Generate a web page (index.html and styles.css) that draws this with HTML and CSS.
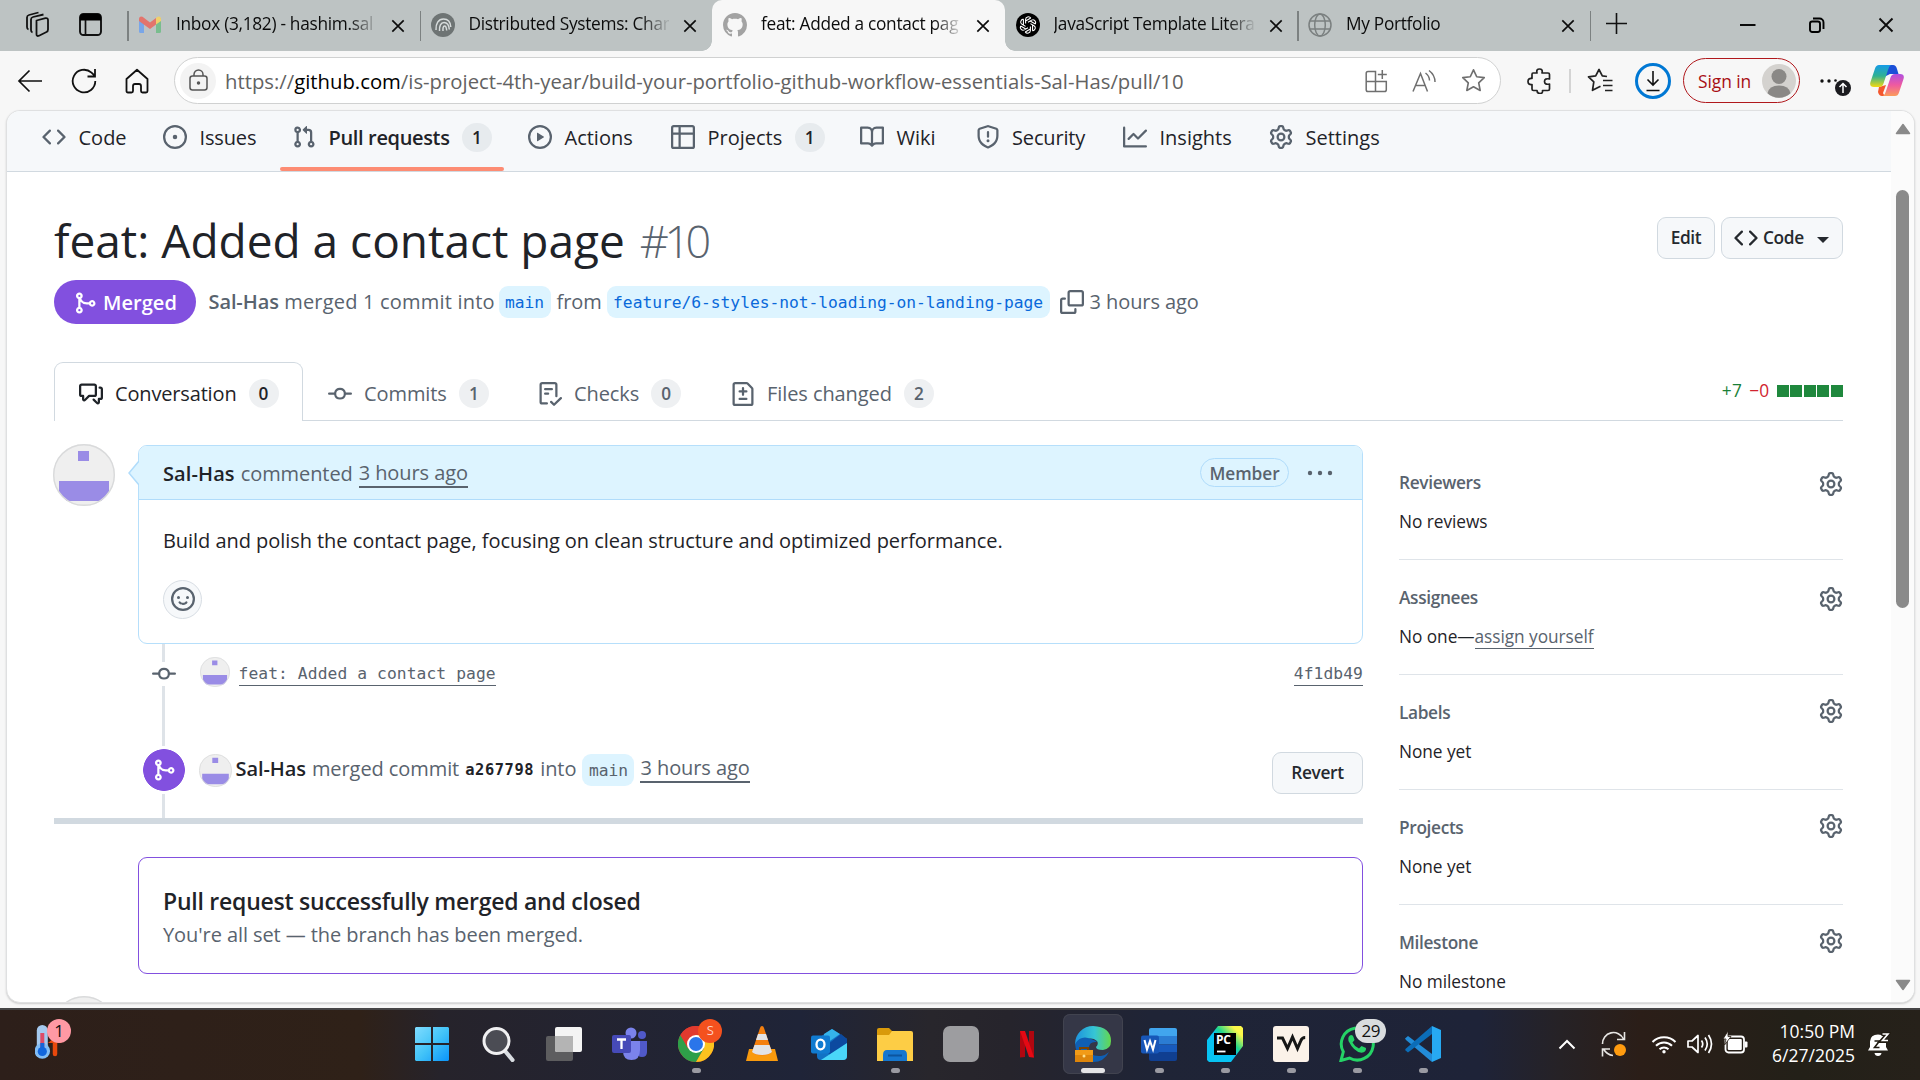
FILE: index.html
```html
<!DOCTYPE html>
<html lang="en">
<head>
<meta charset="utf-8">
<title>feat: Added a contact page</title>
<link rel="stylesheet" href="styles.css">
</head>
<body>
<svg class="defs" aria-hidden="true">
  <symbol id="code" viewBox="0 0 16 16"><path d="m11.28 3.22 4.25 4.25a.75.75 0 0 1 0 1.06l-4.25 4.25a.749.749 0 0 1-1.275-.326.749.749 0 0 1 .215-.734L13.94 8l-3.72-3.72a.749.749 0 0 1 .326-1.275.749.749 0 0 1 .734.215Zm-6.56 0a.751.751 0 0 1 1.042.018.751.751 0 0 1 .018 1.042L2.06 8l3.72 3.72a.749.749 0 0 1-.326 1.275.749.749 0 0 1-.734-.215L.47 8.53a.75.75 0 0 1 0-1.06Z"/></symbol>
  <symbol id="issue" viewBox="0 0 16 16"><path d="M8 9.5a1.5 1.5 0 1 0 0-3 1.5 1.5 0 0 0 0 3Z"/><path d="M8 0a8 8 0 1 1 0 16A8 8 0 0 1 8 0ZM1.5 8a6.5 6.5 0 1 0 13 0 6.5 6.5 0 0 0-13 0Z"/></symbol>
  <symbol id="pr" viewBox="0 0 16 16"><path d="M1.5 3.25a2.25 2.25 0 1 1 3 2.122v5.256a2.251 2.251 0 1 1-1.5 0V5.372A2.25 2.25 0 0 1 1.5 3.25Zm5.677-.177L9.573.677A.25.25 0 0 1 10 .854V2.5h1A2.5 2.5 0 0 1 13.5 5v5.628a2.251 2.251 0 1 1-1.5 0V5a1 1 0 0 0-1-1h-1v1.646a.25.25 0 0 1-.427.177L7.177 3.427a.25.25 0 0 1 0-.354ZM3.75 2.5a.75.75 0 1 0 0 1.5.75.75 0 0 0 0-1.5Zm0 9.5a.75.75 0 1 0 0 1.5.75.75 0 0 0 0-1.5Zm8.25.75a.75.75 0 1 0 1.5 0 .75.75 0 0 0-1.5 0Z"/></symbol>
  <symbol id="play" viewBox="0 0 16 16"><path d="M8 0a8 8 0 1 1 0 16A8 8 0 0 1 8 0ZM1.5 8a6.5 6.5 0 1 0 13 0 6.5 6.5 0 0 0-13 0Zm4.879-2.773 4.264 2.559a.25.25 0 0 1 0 .428l-4.264 2.559A.25.25 0 0 1 6 10.559V5.442a.25.25 0 0 1 .379-.215Z"/></symbol>
  <symbol id="table" viewBox="0 0 16 16"><path d="M0 1.75C0 .784.784 0 1.75 0h12.5C15.216 0 16 .784 16 1.75v12.5A1.75 1.75 0 0 1 14.25 16H1.75A1.75 1.75 0 0 1 0 14.25ZM6.5 6.5v8h7.75a.25.25 0 0 0 .25-.25V6.5Zm8-1.5V1.75a.25.25 0 0 0-.25-.25H6.5V5Zm-13 1.5v7.75c0 .138.112.25.25.25H5v-8ZM5 5V1.5H1.75a.25.25 0 0 0-.25.25V5Z"/></symbol>
  <symbol id="book" viewBox="0 0 16 16"><path d="M0 1.75A.75.75 0 0 1 .75 1h4.253c1.227 0 2.317.59 3 1.501A3.743 3.743 0 0 1 11.006 1h4.245a.75.75 0 0 1 .75.75v10.5a.75.75 0 0 1-.75.75h-4.507a2.25 2.25 0 0 0-1.591.659l-.622.621a.75.75 0 0 1-1.06 0l-.622-.621A2.25 2.25 0 0 0 5.258 13H.75a.75.75 0 0 1-.75-.75Zm7.251 10.324.004-5.073-.002-2.253A2.25 2.25 0 0 0 5.003 2.5H1.5v9h3.757a3.75 3.75 0 0 1 1.994.574ZM8.755 4.75l-.004 7.322a3.752 3.752 0 0 1 1.992-.572H14.5v-9h-3.495a2.25 2.25 0 0 0-2.25 2.25Z"/></symbol>
  <symbol id="shield" viewBox="0 0 16 16"><path d="M7.467.133a1.748 1.748 0 0 1 1.066 0l5.25 1.68A1.75 1.75 0 0 1 15 3.48V7c0 1.566-.32 3.182-1.303 4.682-.983 1.498-2.585 2.813-5.032 3.855a1.697 1.697 0 0 1-1.33 0c-2.447-1.042-4.049-2.357-5.032-3.855C1.32 10.182 1 8.566 1 7V3.48a1.75 1.75 0 0 1 1.217-1.667Zm.61 1.429a.25.25 0 0 0-.153 0l-5.25 1.68a.25.25 0 0 0-.174.238V7c0 1.358.275 2.666 1.057 3.86.784 1.194 2.121 2.34 4.366 3.297a.196.196 0 0 0 .154 0c2.245-.956 3.582-2.104 4.366-3.298C13.225 9.666 13.5 8.36 13.5 7V3.48a.251.251 0 0 0-.174-.237l-5.25-1.68ZM8.75 4.75v3a.75.75 0 0 1-1.5 0v-3a.75.75 0 0 1 1.5 0ZM9 10.5a1 1 0 1 1-2 0 1 1 0 0 1 2 0Z"/></symbol>
  <symbol id="graph" viewBox="0 0 16 16"><path d="M1.5 1.75V13.5h13.75a.75.75 0 0 1 0 1.5H.75a.75.75 0 0 1-.75-.75V1.75a.75.75 0 0 1 1.5 0Zm14.28 2.53-5.25 5.25a.75.75 0 0 1-1.06 0L7 7.06 4.28 9.78a.751.751 0 0 1-1.042-.018.751.751 0 0 1-.018-1.042l3.25-3.25a.75.75 0 0 1 1.06 0L10 7.94l4.72-4.72a.751.751 0 0 1 1.042.018.751.751 0 0 1 .018 1.042Z"/></symbol>
  <symbol id="gear" viewBox="0 0 16 16"><path d="M8 0a8.2 8.2 0 0 1 .701.031C9.444.095 9.99.645 10.16 1.29l.288 1.107c.018.066.079.158.212.224.231.114.454.243.668.386.123.082.233.09.299.071l1.103-.303c.644-.176 1.392.021 1.82.63.27.385.506.792.704 1.218.315.675.111 1.422-.364 1.891l-.814.806c-.049.048-.098.147-.088.294.016.257.016.515 0 .772-.01.147.038.246.088.294l.814.806c.475.469.679 1.216.364 1.891a7.977 7.977 0 0 1-.704 1.217c-.428.61-1.176.807-1.82.63l-1.102-.302c-.067-.019-.177-.011-.3.071a5.909 5.909 0 0 1-.668.386c-.133.066-.194.158-.211.224l-.29 1.106c-.168.646-.715 1.196-1.458 1.26a8.006 8.006 0 0 1-1.402 0c-.743-.064-1.289-.614-1.458-1.26l-.289-1.106c-.018-.066-.079-.158-.212-.224a5.738 5.738 0 0 1-.668-.386c-.123-.082-.233-.09-.299-.071l-1.103.303c-.644.176-1.392-.021-1.82-.63a8.12 8.12 0 0 1-.704-1.218c-.315-.675-.111-1.422.363-1.891l.815-.806c.05-.048.098-.147.088-.294a6.214 6.214 0 0 1 0-.772c.01-.147-.038-.246-.088-.294l-.815-.806C.635 6.045.431 5.298.746 4.623a7.92 7.92 0 0 1 .704-1.217c.428-.61 1.176-.807 1.82-.63l1.102.302c.067.019.177.011.3-.071.214-.143.437-.272.668-.386.133-.066.194-.158.211-.224l.29-1.106C6.009.645 6.556.095 7.299.03 7.53.01 7.764 0 8 0Zm-.571 1.525c-.036.003-.108.036-.137.146l-.289 1.105c-.147.561-.549.967-.998 1.189-.173.086-.34.183-.5.29-.417.278-.97.423-1.529.27l-1.103-.303c-.109-.03-.175.016-.195.045-.22.312-.412.644-.573.99-.014.031-.021.11.059.19l.815.806c.411.406.562.957.53 1.456a4.709 4.709 0 0 0 0 .582c.032.499-.119 1.05-.53 1.456l-.815.806c-.081.08-.073.159-.059.19.162.346.353.677.573.989.02.03.085.076.195.046l1.102-.303c.56-.153 1.113-.008 1.53.27.161.107.328.204.501.29.447.222.85.629.997 1.189l.289 1.105c.029.109.101.143.137.146a6.6 6.6 0 0 0 1.142 0c.036-.003.108-.036.137-.146l.289-1.105c.147-.561.549-.967.998-1.189.173-.086.34-.183.5-.29.417-.278.97-.423 1.529-.27l1.103.303c.109.029.175-.016.195-.045.22-.313.411-.644.573-.99.014-.031.021-.11-.059-.19l-.815-.806c-.411-.406-.562-.957-.53-1.456a4.709 4.709 0 0 0 0-.582c-.032-.499.119-1.05.53-1.456l.815-.806c.081-.08.073-.159.059-.19a6.464 6.464 0 0 0-.573-.989c-.02-.03-.085-.076-.195-.046l-1.102.303c-.56.153-1.113.008-1.53-.27a4.44 4.44 0 0 0-.501-.29c-.447-.222-.85-.629-.997-1.189l-.289-1.105c-.029-.11-.101-.143-.137-.146a6.6 6.6 0 0 0-1.142 0ZM11 8a3 3 0 1 1-6 0 3 3 0 0 1 6 0ZM9.5 8a1.5 1.5 0 1 0-3.001.001A1.5 1.5 0 0 0 9.5 8Z"/></symbol>
  <symbol id="merge" viewBox="0 0 16 16"><path d="M5.45 5.154A4.25 4.25 0 0 0 9.25 7.5h1.378a2.251 2.251 0 1 1 0 1.5H9.25A5.734 5.734 0 0 1 5 7.123v3.505a2.25 2.25 0 1 1-1.5 0V5.372a2.25 2.25 0 1 1 1.95-.218ZM4.25 13.5a.75.75 0 1 0 0-1.5.75.75 0 0 0 0 1.5Zm8.5-4.5a.75.75 0 1 0 0-1.5.75.75 0 0 0 0 1.5ZM5 3.25a.75.75 0 1 0 0 .005V3.25Z"/></symbol>
  <symbol id="commit" viewBox="0 0 16 16"><path d="M11.93 8.5a4.002 4.002 0 0 1-7.86 0H.75a.75.75 0 0 1 0-1.5h3.32a4.002 4.002 0 0 1 7.86 0h3.32a.75.75 0 0 1 0 1.5Zm-1.43-.75a2.5 2.5 0 1 0-5 0 2.5 2.5 0 0 0 5 0Z"/></symbol>
  <symbol id="comments" viewBox="0 0 16 16"><path d="M1.75 1h8.5c.966 0 1.75.784 1.75 1.75v5.5A1.75 1.75 0 0 1 10.25 10H7.061l-2.574 2.573A1.458 1.458 0 0 1 2 11.543V10h-.25A1.75 1.75 0 0 1 0 8.25v-5.5C0 1.784.784 1 1.75 1ZM1.5 2.75v5.5c0 .138.112.25.25.25h1a.75.75 0 0 1 .75.75v2.19l2.72-2.72a.749.749 0 0 1 .53-.22h3.5a.25.25 0 0 0 .25-.25v-5.5a.25.25 0 0 0-.25-.25h-8.5a.25.25 0 0 0-.25.25Zm13 2a.25.25 0 0 0-.25-.25h-.5a.75.75 0 0 1 0-1.5h.5c.966 0 1.75.784 1.75 1.75v5.5A1.75 1.75 0 0 1 14.25 12H14v1.543a1.458 1.458 0 0 1-2.487 1.03L9.22 12.28a.749.749 0 0 1 .326-1.275.749.749 0 0 1 .734.215l2.22 2.22v-2.19a.75.75 0 0 1 .75-.75h1a.25.25 0 0 0 .25-.25Z"/></symbol>
  <symbol id="checklist" viewBox="0 0 16 16"><path d="M2.5 1.75v11.5c0 .138.112.25.25.25h3.17a.75.75 0 0 1 0 1.5H2.75A1.75 1.75 0 0 1 1 13.25V1.75C1 .784 1.784 0 2.75 0h8.5C12.216 0 13 .784 13 1.75v7.736a.75.75 0 0 1-1.5 0V1.75a.25.25 0 0 0-.25-.25h-8.5a.25.25 0 0 0-.25.25Zm13.274 9.537v-.001l-4.557 4.45a.75.75 0 0 1-1.055-.008l-1.943-1.95a.75.75 0 0 1 1.062-1.058l1.419 1.425 4.026-3.932a.75.75 0 1 1 1.048 1.074ZM4.75 4h4.5a.75.75 0 0 1 0 1.5h-4.5a.75.75 0 0 1 0-1.5ZM4 7.75A.75.75 0 0 1 4.75 7h2a.75.75 0 0 1 0 1.5h-2A.75.75 0 0 1 4 7.75Z"/></symbol>
  <symbol id="filediff" viewBox="0 0 16 16"><path d="M1 1.75C1 .784 1.784 0 2.75 0h7.586c.464 0 .909.184 1.237.513l2.914 2.914c.329.328.513.773.513 1.237v9.586A1.75 1.75 0 0 1 13.25 16H2.75A1.75 1.75 0 0 1 1 14.25Zm1.75-.25a.25.25 0 0 0-.25.25v12.5c0 .138.112.25.25.25h10.5a.25.25 0 0 0 .25-.25V4.664a.25.25 0 0 0-.073-.177l-2.914-2.914a.25.25 0 0 0-.177-.073ZM8 3.25a.75.75 0 0 1 .75.75v1.5h1.5a.75.75 0 0 1 0 1.5h-1.5v1.5a.75.75 0 0 1-1.5 0V7h-1.5a.75.75 0 0 1 0-1.5h1.5V4A.75.75 0 0 1 8 3.25Zm-3 8a.75.75 0 0 1 .75-.75h4.5a.75.75 0 0 1 0 1.5h-4.5a.75.75 0 0 1-.75-.75Z"/></symbol>
  <symbol id="copy" viewBox="0 0 16 16"><path d="M0 6.75C0 5.784.784 5 1.75 5h1.5a.75.75 0 0 1 0 1.5h-1.5a.25.25 0 0 0-.25.25v7.5c0 .138.112.25.25.25h7.5a.25.25 0 0 0 .25-.25v-1.5a.75.75 0 0 1 1.5 0v1.5A1.75 1.75 0 0 1 9.25 16h-7.5A1.75 1.75 0 0 1 0 14.25Z"/><path d="M5 1.75C5 .784 5.784 0 6.75 0h7.5C15.216 0 16 .784 16 1.75v7.5A1.75 1.75 0 0 1 14.25 11h-7.5A1.75 1.75 0 0 1 5 9.25Zm1.75-.25a.25.25 0 0 0-.25.25v7.5c0 .138.112.25.25.25h7.5a.25.25 0 0 0 .25-.25v-7.5a.25.25 0 0 0-.25-.25Z"/></symbol>
  <symbol id="smiley" viewBox="0 0 16 16"><path d="M8 0a8 8 0 1 1 0 16A8 8 0 0 1 8 0ZM1.5 8a6.5 6.5 0 1 0 13 0 6.5 6.5 0 0 0-13 0Zm3.82 1.636a.75.75 0 0 1 1.038.175l.007.009c.103.118.22.222.35.31.264.178.683.37 1.285.37.602 0 1.02-.192 1.285-.371.13-.088.247-.192.35-.31l.007-.008a.75.75 0 0 1 1.222.87l-.022-.015c.02.013.021.015.021.015v.001l-.001.002-.002.003-.005.007-.014.019a2.066 2.066 0 0 1-.184.213c-.16.166-.338.316-.53.445-.63.418-1.37.638-2.127.629-.946 0-1.652-.308-2.126-.63a3.331 3.331 0 0 1-.715-.657l-.014-.02-.005-.006-.002-.003v-.002h-.001l.613-.432-.614.43a.75.75 0 0 1 .183-1.044ZM12 7a1 1 0 1 1-2 0 1 1 0 0 1 2 0ZM5 8a1 1 0 1 1 0-2 1 1 0 0 1 0 2Z"/></symbol>
  <symbol id="github" viewBox="0 0 16 16"><path d="M8 0c4.42 0 8 3.58 8 8a8.013 8.013 0 0 1-5.45 7.59c-.4.08-.55-.17-.55-.38 0-.27.01-1.13.01-2.2 0-.75-.25-1.23-.54-1.48 1.78-.2 3.65-.88 3.65-3.95 0-.88-.31-1.59-.82-2.15.08-.2.36-1.02-.08-2.12 0 0-.67-.22-2.2.82-.64-.18-1.32-.27-2-.27-.68 0-1.36.09-2 .27-1.53-1.03-2.2-.82-2.2-.82-.44 1.1-.16 1.92-.08 2.12-.51.56-.82 1.28-.82 2.15 0 3.06 1.86 3.75 3.64 3.95-.23.2-.44.55-.51 1.07-.46.21-1.61.55-2.33-.66-.15-.24-.6-.83-1.23-.82-.67.01-.27.38.01.53.34.19.73.9.82 1.13.16.45.68 1.31 2.69.94 0 .67.01 1.3.01 1.49 0 .21-.15.45-.55.38A7.995 7.995 0 0 1 0 8c0-4.42 3.58-8 8-8Z"/></symbol>
  <symbol id="x" viewBox="0 0 16 16"><path d="M1.5 1.5l13 13M14.5 1.5l-13 13" fill="none" stroke="currentColor" stroke-width="1.9"/></symbol>
  <symbol id="star" viewBox="0 0 24 24"><path d="M12 1.8l3.1 6.6 7.2.9-5.3 5 1.4 7.2L12 18l-6.4 3.5L7 14.3l-5.3-5 7.2-.9z" fill="none" stroke="currentColor" stroke-width="1.6" stroke-linejoin="round"/></symbol>
  <symbol id="face" viewBox="0 0 62 62"><circle cx="31" cy="31" r="31" fill="#efefef"/><path d="M25 7h11v10H25zM6 37h50v10.500c-2 4-5 7-8 9.500H14c-3-2.500-6-5.500-8-9.500z" fill="#9a8ce6"/><circle cx="31" cy="31" r="30.300" fill="none" stroke="#d9dadb" stroke-width="1.400"/></symbol>
</svg>

<header class="tabstrip">
  <div class="strip-tools">
    <svg width="26" height="26" viewBox="0 0 26 26" fill="none" stroke="#111" stroke-width="1.800" stroke-linejoin="round"><path d="M13.500 9.500l9-2.300q2.500-.5 2.500 1.800v9.500q0 1.800-1.500 2.500l-7.500 3.700q-2.500 1-2.500-1.500z"/><path d="M9.500 21.500Q8 21 8 19V8.500Q8 6.500 10 6l10.500-2.500M5.500 18.500Q4 18 4 16V6.500Q4 4.500 6 4l9.500-2.500"/></svg>
    <svg width="23" height="23" viewBox="0 0 23 23"><rect x="1" y="1" width="21" height="21" rx="3.500" fill="none" stroke="#111" stroke-width="1.900"/><path d="M1 7.500V4a3 3 0 0 1 3-3h15a3 3 0 0 1 3 3v3.500z" fill="#000"/><path d="M6.500 7v15" stroke="#111" stroke-width="1.700"/></svg>
  </div>
  <div class="tab sep">
    <svg class="fav" width="22" height="17" viewBox="0 0 22 17"><path d="M0 2v13.500Q0 17 1.500 17H5V6z" fill="#79a6e8"/><path d="M22 2v13.500q0 1.500-1.500 1.500H17V6z" fill="#79bd8e"/><path d="M17 2l1.500-1.300Q22-.5 22 3v2l-5 3.500z" fill="#f0cf6c"/><path d="M0 5V3Q0-.5 3.500.700L11 6.500 17 2v6.500l-6 4.500L0 5z" fill="#e3746c"/></svg>
    <span class="tab-title">Inbox (3,182) - hashim.sal</span><svg class="close"><use href="#x"/></svg>
  </div>
  <div class="tab sep">
    <svg class="fav" width="24" height="24" viewBox="0 0 24 24"><circle cx="12" cy="12" r="12" fill="#6e7474"/><g fill="none" stroke="#d7dcdc" stroke-width="1.500"><path d="M5 17c-.5-6.500 2.500-11 7.500-11 4.500 0 7 3.500 7.300 8M8.500 18c-.3-5 1.300-8.500 4.500-8.500s5 3 5.300 7M12 18c-.2-3 .2-5 1.500-5s2 2 2.200 4.500"/></g></svg>
    <span class="tab-title">Distributed Systems: Char</span><svg class="close"><use href="#x"/></svg>
  </div>
  <div class="tab active">
    <svg class="fav" width="24" height="24" fill="#a3a3a3"><use href="#github"/></svg>
    <span class="tab-title">feat: Added a contact pag</span><svg class="close"><use href="#x"/></svg>
  </div>
  <div class="tab">
    <svg class="fav" width="24" height="24" viewBox="0 0 24 24"><circle cx="12" cy="12" r="12" fill="#000"/><g fill="none" stroke="#fff" stroke-width="1.100"><path id="k" d="M9.600 10.600V6.400c0-2.600 3.600-3.600 5.200-1.300M14.800 5.100L9.600 8.100"/><use href="#k" transform="rotate(60 12 12)"/><use href="#k" transform="rotate(120 12 12)"/><use href="#k" transform="rotate(180 12 12)"/><use href="#k" transform="rotate(240 12 12)"/><use href="#k" transform="rotate(300 12 12)"/></g></svg>
    <span class="tab-title">JavaScript Template Litera</span><svg class="close"><use href="#x"/></svg>
  </div>
  <div class="tab sep">
    <svg class="fav" width="24" height="24" viewBox="0 0 24 24" fill="none" stroke="#7b8080" stroke-width="1.500"><circle cx="12" cy="12" r="11"/><ellipse cx="12" cy="12" rx="5.300" ry="11"/><path d="M2 8h20M2 16h20"/></svg>
    <span class="tab-title">My Portfolio</span><svg class="close"><use href="#x"/></svg>
  </div>
  <div class="newtab sep"><svg width="21" height="21" viewBox="0 0 21 21" stroke="#111" stroke-width="1.600"><path d="M10.500 0v21M0 10.500h21"/></svg></div>
  <div class="winbtns">
    <svg width="16" height="16" viewBox="0 0 16 16"><path d="M0 8h15.500" stroke="#000" stroke-width="1.900"/></svg>
    <svg width="16" height="16" viewBox="0 0 16 16" fill="none" stroke="#000" stroke-width="1.900"><rect x="1" y="4.500" width="10" height="10.500" rx="2.200"/><path d="M4 1.500h6.500a4 4 0 0 1 4 4V12"/></svg>
    <svg width="16" height="16"><use href="#x"/></svg>
  </div>
</header>

<div class="toolbar">
  <div class="navbtns">
    <svg width="26" height="26" viewBox="0 0 26 26" fill="none" stroke="#111" stroke-width="1.700"><path d="M25 13H2M12.500 2.500L2 13l10.500 10.500"/></svg>
    <svg width="26" height="26" viewBox="0 0 26 26" fill="none" stroke="#111" stroke-width="1.800"><path d="M24.300 13A11.300 11.300 0 1 1 20.500 4.600L24 8M24 1v7.500h-7.500"/></svg>
    <svg width="24" height="26" viewBox="0 0 24 26" fill="none" stroke="#111" stroke-width="1.800" stroke-linejoin="round"><path d="M1.500 11L12 1.800 22.500 11v12q0 1.500-1.500 1.500h-3.500q-1.500 0-1.500-1.500v-5q0-2-2-2h-4q-2 0-2 2v5q0 1.500-1.500 1.500H3q-1.500 0-1.500-1.500z"/></svg>
  </div>
  <div class="urlbar">
    <span class="lock"><svg width="19" height="23" viewBox="0 0 19 23" fill="none" stroke="#555" stroke-width="1.500"><rect x="1" y="7" width="17" height="14" rx="2.500"/><path d="M5 7V5.500a4.500 4.500 0 0 1 9 0V7"/><circle cx="9.500" cy="14" r="1" fill="#555"/></svg></span>
    <span class="url">https://<b>github.com</b>/is-project-4th-year/build-your-portfolio-github-workflow-essentials-Sal-Has/pull/10</span>
    <span class="urlicons">
      <svg width="23" height="24" viewBox="0 0 23 24" fill="none" stroke="#6f6f6f" stroke-width="1.500"><path d="M10.500 22.500H3q-1.800 0-1.800-1.800V4.500q0-2 1.800-2h7.500v20h9q1.800 0 1.800-1.800v-8.200H1M17.300 1v9M12.800 5.500h9"/></svg>
      <svg width="25" height="24" viewBox="0 0 25 24" fill="none" stroke="#6f6f6f" stroke-width="1.500"><path d="M1 22.500L8.500 4.500l7 18M3.500 16.500h10M13.500 4q4 3 4 7.500M17 1.500q6 4.500 6 11.500"/></svg>
      <svg width="25" height="25" color="#6f6f6f"><use href="#star"/></svg>
    </span>
  </div>
  <div class="tools">
    <svg width="24" height="26" viewBox="0 0 24 26" fill="none" stroke="#222" stroke-width="1.700" stroke-linejoin="round"><path d="M6 5h4q-1-4 2.500-4T15 5h6q1.500 0 1.500 1.500V11q-5-1-5 2.500t5 2.500v5q0 1.500-1.500 1.500h-5.500q.5 3-2.500 3t-3-3H6.500Q5 22.500 5 21v-4.500q-4 .5-4-3t4-3V6.500Q5 5 6 5z"/></svg>
    <i class="vsep"></i>
    <svg width="26" height="26" viewBox="0 0 26 26" fill="none" stroke="#222" stroke-width="1.700" stroke-linejoin="round"><path d="M20 8.500l-4.700-.7L12 1.500 8.700 7.800l-7.200 1 5.300 5-1.300 8.500 8-4M16 12.500h9.500M16 17.500h9.500M18 22.500h7.500"/></svg>
    <span class="dl"><svg width="18" height="22" viewBox="0 0 18 22" fill="none" stroke="#111" stroke-width="1.600"><path d="M9 1v14M3.500 9.500L9 15l5.500-5.500M2.500 20.500h13"/></svg></span>
    <span class="signin">Sign in<svg width="34" height="34" viewBox="0 0 34 34"><circle cx="17" cy="17" r="17" fill="#d4d2cf"/><circle cx="17" cy="12.500" r="7.500" fill="#8a8886"/><path d="M5.500 29.300Q7 21.500 17 21.500t11.500 7.800A17 17 0 0 1 5.500 29.300z" fill="#8a8886"/></svg></span>
    <svg width="34" height="30" viewBox="0 0 34 30"><g fill="#111"><circle cx="4" cy="15" r="1.700"/><circle cx="11" cy="15" r="1.700"/><circle cx="17.500" cy="14.500" r="1.300"/></g><circle cx="25" cy="22" r="8" fill="#1b1b1f"/><path d="M25 27v-9.500M21.500 21l3.500-3.500 3.500 3.500" stroke="#fff" stroke-width="1.500" fill="none"/></svg>
    <svg class="copilot" width="34" height="31" viewBox="0 0 34 31"><defs><linearGradient id="cp1" x1="0" y1="0" x2="0" y2="1"><stop offset="0" stop-color="#159be8"/><stop offset=".5" stop-color="#2fb191"/><stop offset="1" stop-color="#f5d90f"/></linearGradient><linearGradient id="cp2" x1="0" y1="0" x2="0" y2="1"><stop offset="0" stop-color="#b04fe0"/><stop offset=".5" stop-color="#ef5aa0"/><stop offset="1" stop-color="#fb9c5b"/></linearGradient></defs><path d="M18 0h5q3 0 4 4l1.500 5H20l-6 3z" fill="#1b4fd8"/><path d="M9 22l7-2-3 8q1 3 4 3h-5q-3 0-4-4z" fill="#f4572e"/><path d="M9 0h12q-2 1-3 5l-4.500 13.500Q12.500 22 9 22H4q-5 0-3.500-5L5 3.500Q6 0 9 0z" fill="url(#cp1)"/><path d="M25 31H13q2-1 3-5l4.500-13.500Q21.500 9 25 9h5q5 0 3.500 5L29 27.500Q28 31 25 31z" fill="url(#cp2)"/></svg>
  </div>
</div>

<div class="frame">
  <main class="page">
    <nav class="reponav">
      <a class="i-code"><svg class="oct"><use href="#code"/></svg>Code</a>
      <a class="i-issues"><svg class="oct"><use href="#issue"/></svg>Issues</a>
      <a class="i-pr current"><svg class="oct"><use href="#pr"/></svg>Pull requests<span class="count">1</span></a>
      <a class="i-actions"><svg class="oct"><use href="#play"/></svg>Actions</a>
      <a class="i-projects"><svg class="oct"><use href="#table"/></svg>Projects<span class="count">1</span></a>
      <a class="i-wiki"><svg class="oct"><use href="#book"/></svg>Wiki</a>
      <a class="i-security"><svg class="oct"><use href="#shield"/></svg>Security</a>
      <a class="i-insights"><svg class="oct"><use href="#graph"/></svg>Insights</a>
      <a class="i-settings"><svg class="oct"><use href="#gear"/></svg>Settings</a>
    </nav>

    <div class="wrap">
      <div class="titlerow">
        <h1>feat: Added a contact page <span>#10</span></h1>
        <div class="actions">
          <button class="btn">Edit</button>
          <button class="btn codebtn"><svg class="oct"><use href="#code"/></svg>Code<i class="caret"></i></button>
        </div>
      </div>
      <div class="meta">
        <span class="state"><svg class="oct"><use href="#merge"/></svg>Merged</span>
        <span class="m-text"><b>Sal-Has</b> merged 1 commit into</span>
        <code class="branch">main</code>
        <span class="from">from</span>
        <code class="branch">feature/6-styles-not-loading-on-landing-page</code>
        <svg class="oct copy"><use href="#copy"/></svg>
        <span class="ago">3 hours ago</span>
      </div>
      <div class="prtabs">
        <a class="on"><svg class="oct"><use href="#comments"/></svg><span>Conversation</span><span class="count">0</span></a>
        <a class="t-commits"><svg class="oct"><use href="#commit"/></svg><span>Commits</span><span class="count">1</span></a>
        <a class="t-checks"><svg class="oct"><use href="#checklist"/></svg><span>Checks</span><span class="count">0</span></a>
        <a class="t-files"><svg class="oct"><use href="#filediff"/></svg><span>Files changed</span><span class="count">2</span></a>
        <div class="diffstat"><span class="add">+7</span><span class="del">−0</span><span class="blocks"><i></i><i></i><i></i><i></i><i></i></span></div>
      </div>

      <div class="columns">
        <section class="thread">
          <div class="comment-row">
            <svg class="avatar"><use href="#face"/></svg>
            <article class="comment">
              <svg class="pointer" width="11" height="24" viewBox="0 0 11 24"><path d="M11 0L1 12l10 12" fill="#ddf4ff" stroke="#b0dcfb" stroke-width="1.500"/></svg>
              <header><b>Sal-Has</b><span>commented</span><a>3 hours ago</a><em>Member</em><svg class="kebab" width="26" height="6" viewBox="0 0 26 6" fill="#59636e"><circle cx="3" cy="3" r="2.200"/><circle cx="13" cy="3" r="2.200"/><circle cx="23" cy="3" r="2.200"/></svg></header>
              <p>Build and polish the contact page, focusing on clean structure and optimized performance.</p>
              <button class="emoji"><svg class="oct"><use href="#smiley"/></svg></button>
            </article>
          </div>
          <div class="timeline">
            <div class="item first">
              <span class="badge plain"><svg class="oct"><use href="#commit"/></svg></span>
              <svg class="mini"><use href="#face"/></svg>
              <a class="mono msg">feat: Added a contact page</a>
              <a class="mono sha">4f1db49</a>
            </div>
            <div class="item second">
              <span class="badge purple"><svg class="oct"><use href="#merge"/></svg></span>
              <svg class="mini big"><use href="#face"/></svg>
              <b>Sal-Has</b><span class="mc">merged commit</span><b class="mono hash">a267798</b><span class="into">into</span><code class="branch grey">main</code><a class="when">3 hours ago</a>
              <button class="btn revert">Revert</button>
            </div>
          </div>
          <hr>
          <div class="mergedbox"><h3>Pull request successfully merged and closed</h3><p>You're all set — the branch has been merged.</p></div>
          <svg class="avatar next"><use href="#face"/></svg>
        </section>
        <aside>
          <section><h4>Reviewers<svg class="oct"><use href="#gear"/></svg></h4><p>No reviews</p></section>
          <section><h4>Assignees<svg class="oct"><use href="#gear"/></svg></h4><p>No one—<a>assign yourself</a></p></section>
          <section><h4>Labels<svg class="oct up"><use href="#gear"/></svg></h4><p>None yet</p></section>
          <section><h4>Projects<svg class="oct up"><use href="#gear"/></svg></h4><p>None yet</p></section>
          <section><h4>Milestone<svg class="oct up"><use href="#gear"/></svg></h4><p>No milestone</p></section>
        </aside>
      </div>
    </div>
  </main>
  <div class="scrollbar">
    <svg width="16" height="12" viewBox="0 0 16 12"><path d="M8 1.500L14.500 10.500h-13z" fill="#8a8a8a" stroke="#8a8a8a" stroke-width="1.500" stroke-linejoin="round"/></svg>
    <i class="thumb"></i>
    <svg class="down" width="16" height="12" viewBox="0 0 16 12"><path d="M8 10.500L1.500 1.500h13z" fill="#8a8a8a" stroke="#8a8a8a" stroke-width="1.500" stroke-linejoin="round"/></svg>
  </div>
</div>

<footer class="taskbar">
  <div class="weather">
    <svg width="40" height="48" viewBox="0 0 40 48"><path d="M20 25v13" stroke="#e8480c" stroke-width="4.500" stroke-linecap="round"/><path d="M13 27l7-6 7 6z" fill="#e8480c"/><rect x="1.800" y="9" width="11" height="28" rx="5.500" fill="#a5c9ee"/><circle cx="7.300" cy="35" r="7.800" fill="#82bdf5"/><path d="M7.300 17v16" stroke="#dd4b67" stroke-width="4"/><path d="M7.300 27v9" stroke="#1565d8" stroke-width="4"/><circle cx="7.300" cy="35.500" r="4.600" fill="#1166dd"/></svg>
    <span class="wbadge">1</span>
  </div>
  <div class="apps">
    <span class="app"><svg viewBox="0 0 36 36"><defs><linearGradient id="wn" x1="0" y1="0" x2="1" y2="1"><stop offset="0" stop-color="#80dcff"/><stop offset=".5" stop-color="#43c4f8"/><stop offset="1" stop-color="#0a94fa"/></linearGradient></defs><path d="M2 1h15v16H1V2zM19 1h15l1 1v15H19zM1 19h16v16H2l-1-1zM19 19h16v15l-1 1H19z" fill="url(#wn)"/></svg></span>
    <span class="app"><svg viewBox="0 0 36 36"><path d="M25.500 25.500l7 8.500" stroke="#d9dde2" stroke-width="4.200" stroke-linecap="round"/><circle cx="16.500" cy="15" r="12.500" fill="#4b4c54" stroke="#f0f0f2" stroke-width="3"/></svg></span>
    <span class="app"><svg viewBox="0 0 36 36"><rect y="10" width="27" height="25" rx="2" fill="#5d5d5f"/><rect x="9" y="1" width="27" height="25" rx="2" fill="#f4f4f4"/><path d="M9 10h18v16H11q-2 0-2-2z" fill="#b4b4b4"/></svg></span>
    <span class="app"><svg viewBox="0 0 36 36"><circle cx="30" cy="9" r="4" fill="#5059c9"/><path d="M26 15h9v11q0 5-5 5t-5-5z" fill="#5059c9"/><circle cx="19" cy="7" r="5.500" fill="#7b83eb"/><path d="M11 15h17v9q0 10-8.500 10T11 25z" fill="#7b83eb"/><rect y="9" width="19" height="18" rx="2" fill="#464ab8"/><path d="M5 13.500h9M9.500 13.500V23" stroke="#fff" stroke-width="2.300"/></svg></span>
    <span class="app run"><svg viewBox="0 0 36 36"><circle cx="18" cy="18" r="18" fill="#e13a2e"/><path d="M2.400 9A18 18 0 0 0 18 36l8-13.500-8-4.500-7.800 4.500z" fill="#2e9f49"/><path d="M33.600 9A18 18 0 0 1 18 36l7.800-13.500L18 9z" fill="#fcc31e"/><path d="M18 9h15.600A18 18 0 0 0 2.400 9l7.800 13.500z" fill="#e13a2e"/><circle cx="18" cy="18" r="9" fill="#fff"/><circle cx="18" cy="18" r="7" fill="#2a75ea"/></svg><i class="profile">S</i></span>
    <span class="app"><svg viewBox="0 0 36 36"><path d="M5 23h26l3 12H2z" fill="#f99a0e"/><path d="M18 0q1.500 0 2 2l8 24q-3 3.500-10 3.500T8 26l8-24q.5-2 2-2z" fill="#f47f0e"/><path d="M14 8h8l2 6H12zM10.500 19h15l2.500 7q-3 3-10 3T8 26z" fill="#e2e3e6"/></svg></span>
    <span class="app"><svg viewBox="0 0 36 36"><path d="M6 13L21 3l15 10v17q0 4-4 4H10q-4 0-4-4z" fill="#1272c4"/><path d="M13 8l8-5 8 5-16 11z" fill="#35b4ea"/><path d="M36 13v5L20 30l-8-8L30 8z" fill="#0c4aa0"/><path d="M36 17v13q0 4-4 4H10z" fill="#4ad6f8"/><rect y="9.500" width="19" height="18" rx="2" fill="#117bd0"/><ellipse cx="9.500" cy="18.500" rx="4" ry="4.800" fill="none" stroke="#fff" stroke-width="2.300"/></svg></span>
    <span class="app run"><svg viewBox="0 0 36 36"><path d="M0 4q0-2 2-2h10l4 4v6H0z" fill="#d99a0a"/><path d="M0 9h12l3-4h19q2 0 2 2v28H0z" fill="#fdcd45"/><path d="M6 35v-6q0-5 4-5h16q4 0 4 5v6z" fill="#1677cf"/><path d="M11 29.500h14" stroke="#0c559e" stroke-width="2"/></svg></span>
    <span class="app"><svg viewBox="0 0 36 36"><rect width="36" height="36" rx="7" fill="#9d9da0"/></svg></span>
    <span class="app"><svg viewBox="0 0 36 36"><path d="M11 5h5v26l-5 .5zM20 5h5v26.500l-5-.5z" fill="#b00710"/><path d="M11 5h5l9 26.500-5-.5z" fill="#e50914"/></svg></span>
    <span class="app focus"><svg viewBox="0 0 36 36"><defs><linearGradient id="eg"><stop offset="0" stop-color="#1d92dd"/><stop offset=".55" stop-color="#36c6d5"/><stop offset="1" stop-color="#64d84c"/></linearGradient></defs><path d="M0 18a18 18 0 0 1 18-18q18 1 18 15 0 8-8 9-7 0-7-3 3-3 1-6-8-6-14 3z" fill="url(#eg)"/><path d="M0 18q5-8 13-6 7 2 9 4-8-1-8 6 0 9 12 8 5-1 8-4-5 10-16 10Q2 36 0 18z" fill="#0f5fb4"/><path d="M0 24h18v12H0z" fill="#dd850b"/><path d="M0 24h18v5H0z" fill="#f29b17"/><path d="M5 24v-2h8v2" fill="none" stroke="#7b4300" stroke-width="2"/><circle cx="9" cy="30" r="1.500" fill="#ffe08a"/></svg></span>
    <span class="app run"><svg viewBox="0 0 36 36"><path d="M8 10V4q0-2 2-2h24q2 0 2 2v6z" fill="#41a5ee"/><path d="M8 10h28v8.500H8z" fill="#2b7cd3"/><path d="M8 18.500h28V26H8z" fill="#185abd"/><path d="M8 26h28v7q0 2-2 2H10q-2 0-2-2z" fill="#103f91"/><rect y="9.500" width="18" height="18" rx="2" fill="#1756b8"/><path d="M3.500 14l2.500 9.500L9 15l3 8.500 2.500-9.500" fill="none" stroke="#fff" stroke-width="2"/></svg></span>
    <span class="app run"><svg viewBox="0 0 36 36"><defs><linearGradient id="pc" x1="0" y1="1" x2="1" y2="0"><stop offset=".5" stop-color="#07c3f2"/><stop offset=".62" stop-color="#21d789"/><stop offset=".85" stop-color="#fcf84a"/></linearGradient></defs><path d="M0 14L11 0h23l2 2v18L24 36H2l-2-2z" fill="url(#pc)"/><rect x="7" y="7" width="22" height="22" fill="#000"/><text x="9" y="18" font-family="Open Sans, sans-serif" font-weight="700" font-size="12" fill="#fff" letter-spacing="-.3">PC</text><path d="M10 25.500h8.500" stroke="#fff" stroke-width="1.800"/></svg></span>
    <span class="app run"><svg viewBox="0 0 36 36"><rect width="36" height="36" rx="3" fill="#fbf2e9"/><path d="M4 12h5.500l5 10.500L19.500 11l5 11.500 3.200-7.500q1.200-3.500 4.500-3.500" fill="none" stroke="#161616" stroke-width="3"/></svg></span>
    <span class="app run"><svg viewBox="0 0 36 36"><path d="M2 34.500l2.300-8.700A16 16 0 1 1 10.500 32z" fill="none" stroke="#25d366" stroke-width="3"/><path d="M12 9q2 0 2.500 2l1 3-2 2.500q2 4 6.500 6l2.500-2.500 4.500 2q.5 4-4.500 4.800Q15 26 9.500 15q-1-5 2.500-6z" fill="#25d366"/></svg><i class="unread">29</i></span>
    <span class="app run"><svg viewBox="0 0 36 36"><path d="M0 12.500l3-2.500 24 18v8L1 14z" fill="#2392e0" opacity=".95"/><path d="M0 24l3 2.500L27 8V0L1 22.500z" fill="#0b6db8"/><path d="M27 0l9 4v28l-9 4z" fill="#27a9f2"/></svg></span>
  </div>
  <div class="tray">
    <svg class="chev" width="18" height="12" viewBox="0 0 18 12"><path d="M1.500 10.500L9 3l7.500 7.500" fill="none" stroke="#fff" stroke-width="2"/></svg>
    <svg class="sync" width="26" height="26" viewBox="0 0 26 26" fill="none" stroke="#e8e6e4" stroke-width="1.600"><path d="M1.500 13A11 11 0 0 1 22.500 8M23.500 1v7.500H16M12 24.500Q6 24 2.500 18M1.500 25.500V18H9"/><circle cx="19" cy="19" r="6" fill="#ff9b0f" stroke="none"/></svg>
    <svg class="wifi" width="26" height="20" viewBox="0 0 26 20" fill="none" stroke="#fff" stroke-width="2"><path d="M1.500 8a16.500 16.500 0 0 1 23 0M5 11.800a11.500 11.500 0 0 1 16 0M8.500 15.200a6.500 6.500 0 0 1 9 0"/><circle cx="13" cy="17.800" r="1.700" fill="#fff" stroke="none"/></svg>
    <svg class="vol" width="26" height="22" viewBox="0 0 26 22" fill="none" stroke="#fff" stroke-width="1.700"><path d="M1 8h4l6-5.500v17L5 14H1zM14.500 7.500q2.500 3.500 0 7M18 4.500q4.500 6.500 0 13M21.500 2q6 9 0 18" stroke-linejoin="round"/></svg>
    <svg class="bat" width="26" height="24" viewBox="0 0 26 24"><rect x="2.500" y="5.500" width="18.500" height="16" rx="3" fill="none" stroke="#fff" stroke-width="1.800"/><rect x="4.800" y="8" width="14" height="11" rx="1" fill="#fff"/><path d="M22 10.500h1.500q1 0 1 1v4q0 1-1 1H22z" fill="#fff"/><path d="M5 0L0 8h3l-1.500 6L8 5.500H5z" fill="#fff" stroke="#25190f" stroke-width=".8"/></svg>
    <div class="clock">10:50 PM<br>6/27/2025</div>
    <svg class="bell" width="24" height="25" viewBox="0 0 24 25"><path d="M1 18.500l2-3.500V9.500Q3.500 2.500 11 2.500q7.500 0 8 7V15l2 3.500z" fill="#fff"/><path d="M7.500 21h7Q14 24 11 24t-3.500-3z" fill="#fff"/><path d="M7.500 9h5l-5 6.500h5" fill="none" stroke="#201b12" stroke-width="1.600"/><path d="M14.500 2h6l-6 7h6" fill="none" stroke="#201b12" stroke-width="4"/><path d="M15.500 2h5.500l-5.500 6.500H21" fill="none" stroke="#fff" stroke-width="1.600"/></svg>
  </div>
</footer>
</body>
</html>
```
FILE: styles.css
```css
* { box-sizing: border-box; }
body {
  margin: 0;
  width: 1920px;
  height: 1080px;
  overflow: hidden;
  display: flex;
  flex-direction: column;
  background: #f7f7f7;
  font: 20px/30px "Open Sans", "Noto Sans", sans-serif;
  letter-spacing: -0.08px;
  color: #1f2328;
}
h1, h3, h4, p { margin: 0; font-weight: 400; }
b, h3, h4 { font-weight: 600; }
svg { flex: none; display: block; }
span, a, b, em, code { white-space: nowrap; }
i, em { font-style: normal; }
button { font: inherit; letter-spacing: inherit; color: inherit; padding: 0; }
.defs { position: absolute; width: 0; height: 0; }
.oct { width: 24px; height: 24px; fill: currentColor; }

/* tab strip */
.tabstrip { flex: none; height: 51px; background: #bdc3c3; display: flex; color: #0c0c0c; }
.strip-tools { width: 127px; height: 48px; padding-left: 23px; display: flex; align-items: center; gap: 30px; }
.tab { position: relative; width: 292.5px; height: 51px; padding: 0 15px 4px 11px; display: flex; align-items: center; font-size: 17.3px; letter-spacing: -0.3px; }
.sep::before { content: ""; position: absolute; left: 0; top: 11px; width: 1.5px; height: 30px; background: #7c8181; }
.fav { margin: 2px 14px 0 0; }
.tab .fav { width: 24px; }
.tab-title { flex: 1; -webkit-mask-image: linear-gradient(90deg, #000 86%, rgba(0, 0, 0, 0.12) 99%); mask-image: linear-gradient(90deg, #000 86%, rgba(0, 0, 0, 0.12) 99%); margin-right: 14px; line-height: 26px; }
.close { width: 14px; height: 14px; margin-top: 4px; }
.active { background: #f7f7f7; border-radius: 10px 10px 0 0; }
.active::before, .active::after { content: ""; position: absolute; bottom: 0; width: 10px; height: 10px; }
.active::before { left: -10px; background: radial-gradient(circle at 0 0, transparent 9.5px, #f7f7f7 10px); }
.active::after { right: -10px; background: radial-gradient(circle at 100% 0, transparent 9.5px, #f7f7f7 10px); }
.newtab { position: relative; height: 47px; padding-left: 16px; display: flex; align-items: center; }
.winbtns { margin-left: auto; margin-right: 26px; height: 50px; display: flex; align-items: center; gap: 53px; }

/* toolbar */
.toolbar { flex: none; height: 59px; padding-top: 6px; display: flex; align-items: flex-start; }
.navbtns { width: 174px; height: 47px; padding-left: 17px; display: flex; align-items: center; gap: 28px; }
.urlbar { width: 1327px; height: 47px; border: 1.5px solid #d0d1d1; border-radius: 24px; background: #fff; display: flex; align-items: center; padding: 0 14px 0 5px; }
.lock { width: 36px; height: 36px; border-radius: 50%; background: #f3f3f3; display: grid; place-items: center; }
.url { margin-left: 9px; color: #626262; font-size: 20.3px; letter-spacing: 0; }
.url b { color: #000; font-weight: 400; }
.urlicons { margin-left: auto; display: flex; align-items: center; gap: 24px; }
.tools { height: 47px; display: flex; align-items: center; margin-left: 25.5px; }
.vsep { width: 2px; height: 24px; background: #d4d4d4; margin: 0 16px 0 18px; }
.dl { margin: 0 12px 0 22.5px; width: 36px; height: 36px; border: 3px solid #0078d4; border-radius: 50%; display: grid; place-items: center; }
.signin { width: 117px; height: 45px; border: 1.8px solid #b0181c; border-radius: 23px; color: #a80f14; font-size: 17.4px; display: flex; align-items: center; justify-content: space-between; padding: 0 3px 0 14px; margin-right: 18px; }
.copilot { margin-left: 18px; }

/* page frame */
.frame { flex: none; width: 1909px; height: 893px; margin-left: 6px; border: 1px solid #dfe0e1; border-radius: 14px; background: #fff; display: flex; overflow: hidden; box-shadow: 0 1px 2px #ccc; }
.page { width: 1884px; overflow: hidden; }
.reponav { height: 61px; background: #f6f8fa; border-bottom: 1px solid #d1d9e0; display: flex; padding-left: 35px; letter-spacing: 0; }
.reponav a { position: relative; height: 60px; padding-bottom: 7px; display: flex; align-items: center; gap: 12.5px; }
.reponav .oct { color: #59636e; margin-top: -1px; }
.i-code { width: 121px; } .i-issues { width: 129px; } .i-pr { width: 236px; }
.i-actions { width: 143px; } .i-projects { width: 189px; } .i-wiki { width: 115.5px; }
.i-security { width: 147.5px; } .i-insights { width: 146px; }
.i-pr { font-weight: 600; letter-spacing: -0.35px; }
.i-issues, .i-security { letter-spacing: -0.15px; }
.current::after { content: ""; position: absolute; left: -12px; bottom: 0; width: 224px; height: 4px; border-radius: 2px; background: #fd8c73; }
.count { min-width: 30px; height: 29px; border-radius: 15px; background: #e7ebee; display: grid; place-items: center; font-size: 17.2px; font-weight: 600; letter-spacing: 0; }

/* header */
.wrap { padding: 38px 0 0 47px; width: 1836px; }
.titlerow { height: 60px; display: flex; justify-content: space-between; }
h1 { font-size: 46px; line-height: 60px; letter-spacing: 0; }
h1 span { font-size: 45px; font-weight: 300; color: #59636e; letter-spacing: -4.5px; margin-left: 3px; }
.actions { display: flex; gap: 6px; padding-top: 7px; }
.btn { height: 42px; border: 1px solid #d1d9e0; border-radius: 9px; background: #f6f8fa; font-size: 17.3px; font-weight: 600; color: #25292e; letter-spacing: -0.35px; }
.actions .btn:first-child { width: 58px; }
.codebtn { width: 122px; display: flex; align-items: center; padding-left: 12px; gap: 5px; }
.caret { border: 6px solid transparent; border-top: 6px solid #25292e; border-bottom: 0; margin: 3px 0 0 8px; }
.meta { height: 44px; margin-top: 10px; display: flex; align-items: center; color: #59636e; }
.state { width: 142px; height: 44px; border-radius: 22px; background: #8250df; color: #fff; font-weight: 600; display: flex; align-items: center; gap: 6px; padding: 2px 0 0 19px; margin-right: 12.5px; letter-spacing: 0.05px; }
.m-text { width: 290px; letter-spacing: 0.2px; }
.m-text b { letter-spacing: -0.1px; }
.from { margin: 0 6px; width: 44px; }
.branch { height: 32px; padding: 0 6.5px; border-radius: 9px; background: #ddf4ff; color: #0969da; font: 16.3px/33px "DejaVu Sans Mono", monospace; letter-spacing: -0.03px; }
.copy { margin: 0 6px 0 10px; }
.prtabs { height: 59px; margin-top: 38px; border-bottom: 1px solid #d1d9e0; display: flex; color: #59636e; }
.prtabs a { height: 59px; display: flex; align-items: center; gap: 12px; padding-top: 4px; }
.prtabs .count { background: #eef0f2; }
.prtabs .on { width: 249px; border: 1px solid #d1d9e0; border-bottom: 0; border-radius: 9px 9px 0 0; background: #fff; color: #1f2328; padding-left: 24px; padding-top: 3px; letter-spacing: -0.16px; }
.t-commits { margin-left: 25px; width: 210px; }
.t-checks { width: 193px; }
.diffstat { margin-left: auto; display: flex; align-items: center; gap: 7px; font-size: 17.3px; padding-bottom: 1px; font-weight: 500; letter-spacing: 0.3px; }
.add { color: #1a7f37; } .del { color: #d1242f; }
.blocks { display: flex; gap: 1.5px; }
.blocks i { width: 12.1px; height: 12px; background: #1f883d; }

/* thread */
.columns { display: flex; gap: 36px; width: 1789px; }
.thread { width: 1309px; padding-top: 24px; }
.comment-row { display: flex; }
.avatar { width: 62px; height: 62px; margin: -1px 23px 0 -1px; }
.comment { position: relative; width: 1225px; height: 199px; border: 1px solid #b6dffb; border-radius: 9px; }
.comment header { height: 54px; border-bottom: 1px solid #b0dcfb; border-radius: 8px 8px 0 0; background: #ddf4ff; display: flex; align-items: center; gap: 6px; padding: 0 29px 0 24px; color: #59636e; }
.comment header > b, .comment header > span, .comment header > a { padding-top: 3px; }
.comment header b { color: #1f2328; letter-spacing: 0.1px; }
.comment a { line-height: 26px; border-bottom: 2px solid #59636e; }
.pointer { position: absolute; left: -11px; top: 15px; }
.comment em { margin-left: auto; width: 89px; height: 29px; border: 1px solid #b0dcfb; border-radius: 15px; text-align: center; line-height: 29px; font-size: 17.3px; font-weight: 600; margin-right: 12px; }
.comment p { padding: 26px 24px 0; letter-spacing: -0.05px; }
.emoji { margin: 23.5px 0 0 24px; width: 39px; height: 39px; border-radius: 50%; border: 1px solid #d8dee4; background: #f6f8fa; color: #59636e; display: grid; place-items: center; }
.timeline { position: relative; height: 174px; margin-left: 89px; color: #59636e; }
.timeline::before { content: ""; position: absolute; left: 19px; top: 0; width: 3px; height: 174px; background: #dee3e8; }
.item { position: relative; display: flex; align-items: center; }
.first { height: 102px; padding-bottom: 43px; }
.second { height: 48px; }
.badge { width: 42px; display: grid; place-items: center; background: #fff; }
.plain { height: 24px; }
.purple { height: 48px; color: #fff; background: radial-gradient(circle, #8250df 20.5px, #fff 21.2px); }
.mini { width: 30px; height: 30px; margin: 0 8.500px 4px 15px; }
.big { width: 33px; height: 33px; margin: 0 3.5px 0 14px; }
.mono { font: 16.3px/24px "DejaVu Sans Mono", monospace; letter-spacing: 0.09px; }
.msg, .sha { line-height: 23px; border-bottom: 1.5px solid #59636e; margin-top: 1px; }
.sha { margin-left: auto; }
.second > b, .second > span:not(.badge), .when { margin-bottom: 2px; }
.second > b { color: #1f2328; }
.mc { margin: 0 6px; }
.second > b.hash { font-weight: 700; font-size: 15.4px; letter-spacing: 0.6px; margin-bottom: 0; }
.into { margin: 0 6px; }
.grey { color: #59636e; }
.when { margin-left: 6px; line-height: 26px; border-bottom: 2px solid #59636e; }
.revert { width: 91px; margin: 5px 0 0 auto; }
hr { height: 6px; margin: 0; border: 0; background: #d1d9e0; }
.mergedbox { margin: 33px 0 0 84px; height: 117px; border: 1px solid #8250df; border-radius: 9px; padding: 25px 24px; }
h3 { font-size: 23px; line-height: 37px; letter-spacing: -0.24px; }
.mergedbox p { color: #59636e; letter-spacing: -0.08px; }
.next { margin-top: 22px; }

/* sidebar */
aside { width: 444px; padding-top: 24px; font-size: 17.3px; letter-spacing: -0.05px; }
aside section { height: 115px; padding-top: 23px; border-bottom: 1px solid #dfe4e9; }
h4 { font-size: 17.3px; color: #59636e; display: flex; justify-content: space-between; height: 30px; letter-spacing: -0.35px; }
h4 .oct { margin-top: 4px; }
h4 .up { margin-top: 1px; }
aside p { margin-top: 9px; }
aside a { display: inline-block; line-height: 23px; color: #59636e; border-bottom: 1.5px solid #59636e; }

/* scrollbar */
.scrollbar { width: 23px; background: #fbfbfb; display: flex; flex-direction: column; align-items: center; padding: 12px 0 11px; margin-left: auto; }
.thumb { width: 13px; height: 418px; border-radius: 7px; background: #8a8a8a; margin-top: 54.5px; }
.down { margin-top: auto; }

/* taskbar */
.taskbar { flex: none; position: relative; margin-top: 5px; height: 72px; border-top: 2px solid #464546; display: flex; background: linear-gradient(90deg, #2d1f1a 0, #2f2118 360px, #26232b 440px, #1f2438 800px, #28262c 930px, #26242c 1010px, #1f2436 1150px, #1e2338 1480px, #262226 1560px, #2b1e18 1640px, #232018 1800px, #26211a 1920px); color: #fff; }
.weather { width: 402px; padding: 6px 0 0 35px; position: relative; }
.wbadge { position: absolute; left: 47px; top: 9px; width: 24px; height: 24px; border-radius: 50%; background: #ff99a4; color: #111; font-size: 17px; line-height: 24px; text-align: center; }
.apps { display: flex; gap: 6.1px; padding-top: 4px; }
.app { position: relative; width: 60px; height: 60px; display: grid; place-items: center; border-radius: 7px; }
.app svg { width: 36px; height: 36px; }
.run::after, .focus::after { content: ""; position: absolute; left: 26px; bottom: 1px; width: 9px; height: 5px; border-radius: 3px; background: #9a9aa2; }
.focus { background: #353747; box-shadow: inset 0 0 0 1px #41434f; }
.focus::after { left: 18px; width: 24px; background: #e4e4e6; }
.profile { position: absolute; left: 32px; top: 5px; width: 24px; height: 24px; border-radius: 50%; background: #f4511e; font-size: 13px; line-height: 23px; text-align: center; color: #ffd2c4; }
.unread { position: absolute; left: 28px; top: 5px; width: 31px; height: 24px; border-radius: 12px; background: #d9dcde; color: #111; font-size: 17px; line-height: 24px; text-align: center; letter-spacing: -0.5px; }
.tray { margin-left: auto; display: flex; align-items: center; height: 68px; padding-right: 29px; }
.sync { margin-left: 25px; }
.wifi { margin-left: 24px; }
.vol { margin-left: 10px; }
.bat { margin-left: 10px; margin-top: -2px; }
.clock { margin: -2px 0 0 21px; width: 85px; text-align: right; font-size: 17.5px; line-height: 24px; letter-spacing: 0; white-space: nowrap; }
.bell { margin-left: 12px; }
```
